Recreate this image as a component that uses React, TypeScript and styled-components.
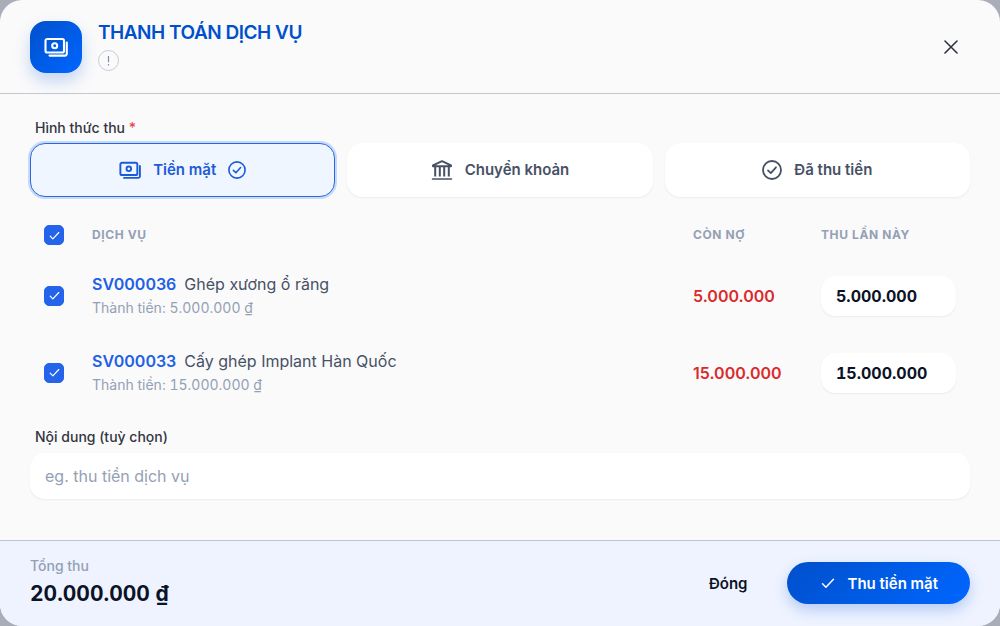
import React, { useState } from "react";
import styled, { createGlobalStyle, css } from "styled-components";

const GlobalStyle = createGlobalStyle`
  *, *::before, *::after { box-sizing: border-box; }
  body {
    margin: 0;
    background: #a9adb8;
    font-family: Inter, "Liberation Sans", sans-serif;
    font-size: 16px;
    color: #0b1326;
  }
  button, input { font-family: inherit; }
`;

const Dialog = styled.form`
  display: flex;
  flex-direction: column;
  min-height: 100vh;
  border-radius: 22px;
  overflow: hidden;
  background: #fafafb;
`;

const Header = styled.header`
  display: flex;
  align-items: center;
  justify-content: space-between;
  padding: 21px 32px 20px 30px;
  border-bottom: 1px solid #c6c8d0;
`;

const Heading = styled.div`
  display: flex;
  align-items: flex-start;
  gap: 16px;
`;

const Emblem = styled.div`
  display: grid;
  place-items: center;
  width: 52px;
  height: 52px;
  border-radius: 16px;
  color: #ffffff;
  background: linear-gradient(135deg, #0050cb, #0066ff);
  box-shadow: 0 8px 16px rgba(0, 80, 203, 0.22);
`;

const TitleGroup = styled.div`
  display: flex;
  flex-direction: column;
  align-items: flex-start;
  gap: 5px;
`;

const Title = styled.h1`
  margin: 0;
  font-size: 19px;
  line-height: 24px;
  font-weight: 600;
  letter-spacing: -0.025em;
  color: #0050cb;
`;

const InfoButton = styled.button`
  display: grid;
  place-items: center;
  width: 21px;
  height: 21px;
  padding: 0;
  border: 1px solid #c9cbd5;
  border-radius: 50%;
  background: transparent;
  color: #7d8bb0;
`;

const CloseButton = styled.button`
  display: grid;
  place-items: center;
  width: 34px;
  height: 34px;
  padding: 0;
  border: 0;
  background: transparent;
  color: #303640;
`;

const Body = styled.main`
  display: flex;
  flex: 1;
  flex-direction: column;
  padding: 24px 30px 40px;
`;

const labelText = css`
  padding: 0 5px;
  font-size: 14px;
  line-height: 20px;
  font-weight: 500;
  color: #33363f;
`;

const MethodGroup = styled.fieldset`
  min-width: 0;
  margin: 0;
  padding: 0;
  border: 0;
`;

const Legend = styled.legend`
  ${labelText}
  margin-bottom: 5px;
`;

const Required = styled.span`
  color: #e5484d;
`;

const Methods = styled.div`
  display: grid;
  grid-template-columns: repeat(3, 1fr);
  gap: 12px;
`;

const HiddenRadio = styled.input`
  position: absolute;
  width: 1px;
  height: 1px;
  margin: 0;
  opacity: 0;
`;

const Method = styled.label<{ $active: boolean }>`
  display: flex;
  align-items: center;
  justify-content: center;
  gap: 12px;
  height: 54px;
  border-radius: 15px;
  font-size: 15px;
  line-height: 24px;
  font-weight: 600;
  cursor: pointer;
  ${(p) =>
    p.$active
      ? css`
          border: 1px solid #2e66dc;
          background: #eff6ff;
          color: #1d5ad8;
          box-shadow: 0 0 0 2px #c5d9f8;
        `
      : css`
          border: 1px solid #ffffff;
          background: #ffffff;
          color: #475165;
          box-shadow: 0 1px 2px rgba(15, 23, 42, 0.06);
        `}
`;

const Services = styled.table`
  width: 100%;
  margin-top: 16px;
  border-collapse: collapse;
  table-layout: fixed;
`;

const CheckCol = styled.col`
  width: 48px;
`;
const DebtCol = styled.col`
  width: 128px;
`;
const AmountCol = styled.col`
  width: 163px;
`;

const HeadCell = styled.th`
  height: 44px;
  padding: 0 14px;
  text-align: left;
  font-size: 12px;
  line-height: 20px;
  font-weight: 700;
  letter-spacing: 0.05em;
  color: #94a0b5;
`;

const Cell = styled.td`
  height: 77px;
  padding: 0 14px;
  vertical-align: middle;
`;

const CheckWrap = styled.label`
  display: grid;
  width: 20px;
  height: 20px;
  color: #ffffff;
  & > * {
    grid-area: 1 / 1;
    place-self: center;
  }
  & > svg {
    pointer-events: none;
  }
`;

const CheckInput = styled.input`
  appearance: none;
  width: 20px;
  height: 20px;
  margin: 0;
  border: 1px solid #cbd5e1;
  border-radius: 5px;
  background: #ffffff;
  &:checked {
    border-color: #2563eb;
    background: #2563eb;
  }
`;

const ServiceLine = styled.div`
  display: flex;
  gap: 8px;
  font-size: 16px;
  line-height: 24px;
  color: #475165;
`;

const ServiceCode = styled.span`
  font-weight: 600;
  color: #2160e6;
`;

const ServicePrice = styled.div`
  font-size: 14px;
  line-height: 24px;
  color: #94a0b5;
  font-variant-numeric: tabular-nums;
`;

const Debt = styled.span`
  font-weight: 600;
  line-height: 24px;
  color: #d92b2b;
`;

const field = css`
  display: block;
  width: 100%;
  border: 1px solid #ffffff;
  background: #ffffff;
  box-shadow: 0 1px 2px rgba(15, 23, 42, 0.06);
  font-size: 16px;
  outline: 0;
`;

const AmountInput = styled.input`
  ${field}
  height: 40px;
  padding: 0 14px;
  border-radius: 14px;
  font-weight: 700;
  color: #0b1326;
  font-variant-numeric: tabular-nums;
`;

const NoteLabel = styled.label`
  ${labelText}
  margin-top: 16px;
`;

const NoteInput = styled.input`
  ${field}
  height: 46px;
  margin-top: 6px;
  padding: 0 14px;
  border-radius: 14px;
  color: #0b1326;
  &::placeholder {
    color: #94a0b5;
    opacity: 1;
  }
`;

const Footer = styled.footer`
  display: flex;
  align-items: center;
  justify-content: space-between;
  padding: 14px 30px 15px;
  border-top: 1px solid #bcc4d6;
  background: #eef3ff;
`;

const TotalLabel = styled.div`
  font-size: 14px;
  line-height: 22px;
  font-weight: 500;
  color: #94a0b5;
`;

const Total = styled.div`
  font-size: 21px;
  line-height: 34px;
  font-weight: 700;
  color: #0b1326;
  font-variant-numeric: tabular-nums;
`;

const Actions = styled.div`
  display: flex;
  align-items: center;
  gap: 16px;
`;

const TextButton = styled.button`
  height: 42px;
  padding: 0 24px;
  border: 0;
  background: transparent;
  font-size: 15px;
  font-weight: 600;
  color: #0b1326;
`;

const PrimaryButton = styled.button`
  display: flex;
  align-items: center;
  gap: 12px;
  height: 42px;
  padding: 0 32px 0 34px;
  border: 0;
  border-radius: 21px;
  background: linear-gradient(135deg, #0050cb, #0066ff);
  box-shadow: 0 6px 14px rgba(0, 80, 203, 0.24);
  font-size: 15px;
  font-weight: 600;
  color: #ffffff;
`;

const CashIcon = ({ size }: { size: number }) => (
  <svg width={size} height={size} viewBox="0 0 24 24" fill="none" stroke="currentColor" strokeWidth="2.1" aria-hidden="true">
    <rect x="1.5" y="4" width="18.5" height="13.5" rx="1.8" />
    <circle cx="10.7" cy="10.7" r="2.5" />
    <path d="M22.8 7.5v11.3a1.8 1.8 0 0 1-1.8 1.8H5.5" strokeLinecap="round" />
  </svg>
);

const BankIcon = () => (
  <svg width="22" height="22" viewBox="0 0 22 22" fill="none" stroke="currentColor" strokeWidth="2" strokeLinejoin="round" aria-hidden="true">
    <path d="M2 7.2V6.4L11 2.2l9 4.2v.8Z" />
    <path d="M4.2 8v9.4M8.8 8v9.4M13.2 8v9.4M17.8 8v9.4" />
    <path d="M1.6 20h18.8" strokeWidth="1.7" strokeLinecap="round" />
  </svg>
);

const CheckCircle = ({ size }: { size: number }) => (
  <svg width={size} height={size} viewBox="0 0 20 20" fill="none" stroke="currentColor" strokeWidth="1.8" strokeLinecap="round" strokeLinejoin="round" aria-hidden="true">
    <circle cx="10" cy="10" r="9" />
    <path d="m6 10.4 2.8 2.7L14 7.3" />
  </svg>
);

const Tick = ({ size }: { size: number }) => (
  <svg width={size} height={size} viewBox="0 0 14 14" fill="none" stroke="currentColor" strokeWidth="1.5" strokeLinecap="round" strokeLinejoin="round" aria-hidden="true">
    <path d="m1.5 7.8 3.4 3.4 7.6-8" />
  </svg>
);

const CloseIcon = () => (
  <svg width="14" height="14" viewBox="0 0 14 14" stroke="currentColor" strokeWidth="1.6" strokeLinecap="round" aria-hidden="true">
    <path d="m1 1 12 12M13 1 1 13" />
  </svg>
);

const ExclamationIcon = () => (
  <svg width="11" height="11" viewBox="0 0 11 11" stroke="currentColor" strokeWidth="1.2" aria-hidden="true">
    <path d="M5.5 1v6.2M5.5 9v1.4" />
  </svg>
);

const methods = [
  { id: "cash", label: "Tiền mặt", icon: <CashIcon size={22} /> },
  { id: "transfer", label: "Chuyển khoản", icon: <BankIcon /> },
  { id: "collected", label: "Đã thu tiền", icon: <CheckCircle size={20} /> },
];

const services = [
  { code: "SV000036", name: "Ghép xương ổ răng", amount: "5.000.000" },
  { code: "SV000033", name: "Cấy ghép Implant Hàn Quốc", amount: "15.000.000" },
];

const RowCheck = ({ label }: { label: string }) => (
  <CheckWrap>
    <CheckInput type="checkbox" defaultChecked aria-label={label} />
    <Tick size={11} />
  </CheckWrap>
);

export default function App() {
  const [method, setMethod] = useState("cash");
  return (
    <>
      <GlobalStyle />
      <Dialog onSubmit={(e) => e.preventDefault()}>
        <Header>
          <Heading>
            <Emblem>
              <CashIcon size={24} />
            </Emblem>
            <TitleGroup>
              <Title>THANH TOÁN DỊCH VỤ</Title>
              <InfoButton type="button" aria-label="Thông tin">
                <ExclamationIcon />
              </InfoButton>
            </TitleGroup>
          </Heading>
          <CloseButton type="button" aria-label="Đóng">
            <CloseIcon />
          </CloseButton>
        </Header>
        <Body>
          <MethodGroup>
            <Legend>
              Hình thức thu <Required>*</Required>
            </Legend>
            <Methods>
              {methods.map((m) => (
                <Method key={m.id} $active={m.id === method}>
                  <HiddenRadio
                    type="radio"
                    name="method"
                    checked={m.id === method}
                    onChange={() => setMethod(m.id)}
                  />
                  {m.icon}
                  {m.label}
                  {m.id === method && <CheckCircle size={18} />}
                </Method>
              ))}
            </Methods>
          </MethodGroup>
          <Services>
            <colgroup>
              <CheckCol />
              <col />
              <DebtCol />
              <AmountCol />
            </colgroup>
            <thead>
              <tr>
                <HeadCell>
                  <RowCheck label="Chọn tất cả" />
                </HeadCell>
                <HeadCell scope="col">DỊCH VỤ</HeadCell>
                <HeadCell scope="col">CÒN NỢ</HeadCell>
                <HeadCell scope="col">THU LẦN NÀY</HeadCell>
              </tr>
            </thead>
            <tbody>
              {services.map((s) => (
                <tr key={s.code}>
                  <Cell>
                    <RowCheck label={s.code} />
                  </Cell>
                  <Cell>
                    <ServiceLine>
                      <ServiceCode>{s.code}</ServiceCode>
                      {s.name}
                    </ServiceLine>
                    <ServicePrice>Thành tiền: {s.amount} ₫</ServicePrice>
                  </Cell>
                  <Cell>
                    <Debt>{s.amount}</Debt>
                  </Cell>
                  <Cell>
                    <AmountInput defaultValue={s.amount} inputMode="numeric" aria-label={`Thu lần này ${s.code}`} />
                  </Cell>
                </tr>
              ))}
            </tbody>
          </Services>
          <NoteLabel htmlFor="note">Nội dung (tuỳ chọn)</NoteLabel>
          <NoteInput id="note" placeholder="eg. thu tiền dịch vụ" />
        </Body>
        <Footer>
          <div>
            <TotalLabel>Tổng thu</TotalLabel>
            <Total>20.000.000 ₫</Total>
          </div>
          <Actions>
            <TextButton type="button">Đóng</TextButton>
            <PrimaryButton type="submit">
              <Tick size={14} />
              Thu tiền mặt
            </PrimaryButton>
          </Actions>
        </Footer>
      </Dialog>
    </>
  );
}
